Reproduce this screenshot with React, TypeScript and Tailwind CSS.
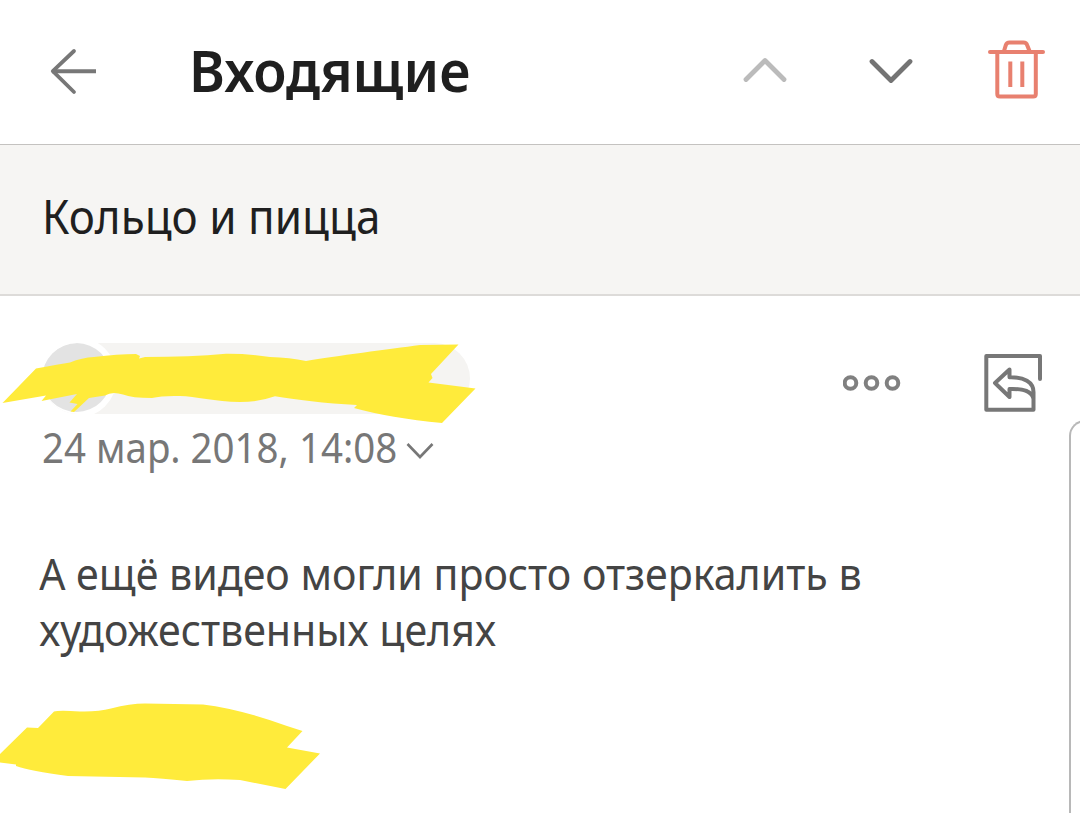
import React from 'react';

const ArrowBackIcon = () => (
    <svg className="w-12 h-12" viewBox="0 0 48 48" fill="none" stroke="#777777" strokeWidth="4">
        <path d="M4 23.2H48" />
        <path d="M26 3L4.8 23.2L26 44" strokeLinecap="round" strokeLinejoin="round" strokeWidth="3.8" />
    </svg>
);

interface ChevronIconProps {
    className: string;
    points: string;
}

const ChevronIcon: React.FC<ChevronIconProps> = ({ className, points }) => (
    <svg className={className} viewBox="0 0 44 28" fill="none" stroke="currentColor" strokeWidth="4.8" strokeLinecap="round" strokeLinejoin="round">
        <polyline points={points} />
    </svg>
);

const TrashIcon = () => (
    <svg className="w-[58px] h-[60px]" viewBox="0 0 58 60" fill="none" stroke="#e8806f" strokeWidth="4" strokeLinecap="round" strokeLinejoin="round">
        <path d="M2 12H55" />
        <path d="M16 11L17.8 5.2Q18.7 2.4 21.5 2.4H35.5Q38.3 2.4 39.2 5.2L41.5 11" />
        <path d="M9.3 13V54Q9.3 56.6 11.9 56.6H45.2Q47.8 56.6 47.8 54V13" />
        <path d="M22.3 21.5V47M34.3 21.5V47" strokeLinecap="butt" />
    </svg>
);

const MoreIcon = () => (
    <svg className="w-[58px] h-4" viewBox="0 0 58 16" fill="none" stroke="#808080" strokeWidth="4">
        <circle cx="7.5" cy="8" r="5.8" />
        <circle cx="28.5" cy="8" r="5.8" />
        <circle cx="49.5" cy="8" r="5.8" />
    </svg>
);

const ReplyIcon = () => (
    <svg className="w-[58px] h-[58px]" viewBox="0 0 58 58" fill="none" stroke="#777777" strokeWidth="4" strokeLinecap="round" strokeLinejoin="round">
        <path d="M56 25V2H2.3V55.8H49.5V38C49.5 28 40 22.8 25.5 23.2V15.5L11 29L25.5 43V35C40 34.5 48 37 49.5 45" />
    </svg>
);

const SenderMarker = () => (
    <svg className="absolute left-0 -top-[3px] w-[480px] h-[90px]" viewBox="0 340 480 90" fill="#ffeb3b">
        <path d="M2.5 403L36 368.5Q60 364 70 362.5Q82 357.5 94 357Q118 354 136 354L140 356L139 358.5L145 357Q190 357 226 353.7Q248 353.5 270 357Q290 357.5 306 361C335 356 390 349 420 345L458.5 344.5L431 374L432.5 378L428.5 382.5L475.5 388.5L442 423Q390 418 354 408L357 405C325 403.5 295 399.5 275 396.3Q259 402 240 402C215 402 195 396 180 396Q162 395.5 152 398Q132 398 123 394.5Q112 391 105 395.5L89 398L74 412L70.5 411.5L77.5 404L69.5 402.5L77 394L41.5 401L46 395.5Z" />
    </svg>
);

const SignatureMarker = () => (
    <svg className="w-[322px] h-[90px]" viewBox="0 702 322 90" fill="#ffeb3b">
        <path d="M0 754L27 727.5L38 728L54 711.5Q59 710 80 711.5Q98 712 111 708.5Q130 703.5 145 703.5L203 704.5Q240 709 287 726L302.5 731L287 747.5L320 753.5L285.5 789L240 780Q212 778 187 781Q160 778 145 777.5L68 776Q30 771 16 766V764.5L0 762.5Z" />
    </svg>
);

export default function App() {
    return (
        <div className="flex flex-col w-[1080px] h-[813px] overflow-hidden bg-white font-['Noto_Sans',sans-serif]">
            <header className="flex items-center h-[145px] shrink-0 pl-12 pr-[34px] pb-px border-b border-[#c4c2c0]">
                <ArrowBackIcon />
                <h1 className="ml-[93px] mb-[3px] text-[58px] leading-[80px] font-semibold origin-left scale-x-[0.94] text-[#1f1f1f]">Входящие</h1>
                <div className="flex items-center ml-auto mb-1">
                    <ChevronIcon className="w-11 h-7 text-[#bbbbbb]" points="3,23.5 22,4.5 41,23.5" />
                    <ChevronIcon className="w-11 h-7 ml-[82px] text-[#747474]" points="3,5.5 22,24.5 41,5.5" />
                    <div className="ml-[75px]">
                        <TrashIcon />
                    </div>
                </div>
            </header>

            <section className="flex items-center h-[151px] shrink-0 px-[42px] pb-[7px] bg-[#f6f5f3] border-b-2 border-[#dddbd9]">
                <h2 className="text-[47px] leading-[64px] origin-left scale-x-[0.937] text-[#1f1f1f]">Кольцо и пицца</h2>
            </section>

            <main className="flex grow">
                <div className="w-[1069px] shrink-0">
                    <div className="flex justify-between pr-[27px] pt-[47px]">
                        <div className="relative w-[480px] h-[71px] pl-[42px]">
                            <div className="flex w-[428px] h-[71px] rounded-full overflow-hidden bg-[#f5f4f2]">
                                <div className="w-[69px] h-[69px] rounded-full bg-[#e3e3e3] ring-6 ring-white" />
                            </div>
                            <SenderMarker />
                        </div>
                        <div className="flex items-center gap-[83px] pt-2">
                            <MoreIcon />
                            <ReplyIcon />
                        </div>
                    </div>

                    <div className="flex items-center h-[66px] pl-[42px] text-[#777777]">
                        <span className="text-[41px] leading-[64px] origin-left scale-x-[0.938]">24 мар. 2018, 14:08</span>
                        <svg className="w-7 h-[18px] -ml-[15px] mt-[7px]" viewBox="0 0 28 18" fill="none" stroke="currentColor" strokeWidth="2.6">
                            <path d="M1.5 2L14 15L26.5 2" />
                        </svg>
                    </div>

                    <p className="pl-[41px] mt-[66px] text-[43px] leading-[56px] origin-left scale-x-[0.956] text-[#444444]">
                        А ещё видео могли просто отзеркалить в
                        <br />
                        художественных целях
                    </p>

                    <div className="mt-11">
                        <SignatureMarker />
                    </div>
                </div>
                <aside className="w-8 shrink-0 mt-[124px] rounded-tl-2xl border-t-2 border-l-2 border-[#b8b8b8]" />
            </main>
        </div>
    );
}
